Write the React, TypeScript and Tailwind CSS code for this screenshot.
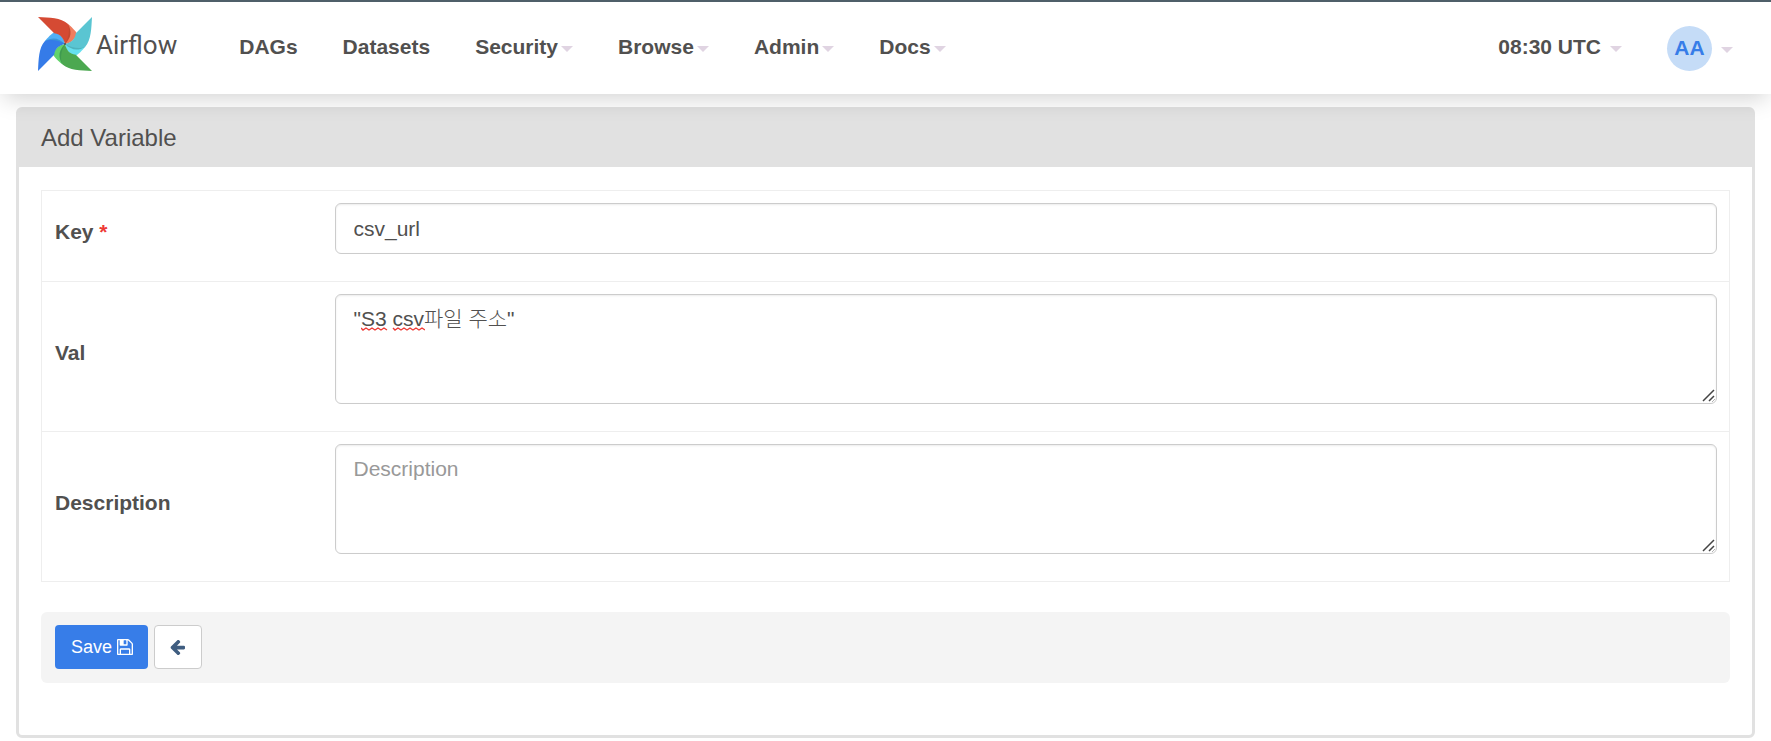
import { useState } from 'react'

const navLinks = [
  { label: 'DAGs', menu: false },
  { label: 'Datasets', menu: false },
  { label: 'Security', menu: true },
  { label: 'Browse', menu: true },
  { label: 'Admin', menu: true },
  { label: 'Docs', menu: true },
]

const blades = [
  { turn: 'rotate(0 80 80)', main: '#d54a33', fold: '#f07d5f', inner: '#c4482f' },
  { turn: 'rotate(90 80 80)', main: '#5ac5d2', fold: '#66e0ef', inner: '#4fb3bd' },
  { turn: 'rotate(180 80 80)', main: '#4ca850', fold: '#62d36b', inner: '#3f9a50' },
  { turn: 'rotate(270 80 80)', main: '#357be8', fold: '#50aff5', inner: '#3a94d8' },
]

const fieldClass =
  'block w-full rounded-md border border-[#ccc] bg-white px-[18px] py-[9px] text-[21px] leading-[30px] text-[#51504f] shadow-[inset_0_1px_2px_rgba(0,0,0,0.075)] outline-none placeholder:text-[#999]'

function Caret() {
  return (
    <svg className="mt-1 h-[6px] w-3 shrink-0" viewBox="0 0 12 6" aria-hidden="true">
      <path d="M0 0h12L6 6z" fill="#e0d4e2" />
    </svg>
  )
}

function Pinwheel() {
  return (
    <svg className="size-[54px]" viewBox="0 0 160 160" aria-hidden="true">
      {blades.map((blade) => (
        <g key={blade.turn} transform={blade.turn}>
          <path d="M88 20C98 28 112 42 114 47Q116 50 113 54C108 68 96 78 80 80Z" fill={blade.fold} />
          <path d="M88 20C102 42 98 62 80 80Z" fill={blade.inner} />
        </g>
      ))}
      {blades.map((blade) => (
        <path
          key={blade.turn}
          transform={blade.turn}
          d="M0 0C34 2 68 2 88 20C95 36 92 60 80 80C76 64 68 50 48 48Z"
          fill={blade.main}
        />
      ))}
      <circle cx="80" cy="80" r="3" fill="#51504f" />
    </svg>
  )
}

function SaveIcon() {
  return (
    <svg className="size-4" viewBox="0 128 1536 1536" fill="currentColor" aria-hidden="true">
      <path d="M384 1536h768v-384h-768v384zM1280 1536h128v-896q0-14-10-38.5t-20-34.5l-281-281q-10-10-34-20t-39-10v416q0 40-28 68t-68 28h-576q-40 0-68-28t-28-68v-416h-128v1280h128v-416q0-40 28-68t68-28h832q40 0 68 28t28 68v416zM896 608v-320q0-13-9.500-22.500t-22.500-9.500h-192q-13 0-22.500 9.500t-9.500 22.500v320q0 13 9.500 22.500t22.500 9.500h192q13 0 22.500-9.500t9.500-22.500zM1536 640v928q0 40-28 68t-68 28h-1344q-40 0-68-28t-28-68v-1344q0-40 28-68t68-28h928q40 0 88 20t76 48l280 280q28 28 48 76t20 88z" />
    </svg>
  )
}

function BackIcon() {
  return (
    <svg className="size-[15px]" viewBox="0 192 1536 1536" fill="currentColor" aria-hidden="true">
      <path d="M1536 896v128q0 53-32.500 90.500t-84.500 37.500h-704l293 294q38 36 38 90t-38 90l-75 76q-37 37-90 37-52 0-91-37l-651-652q-37-37-37-90 0-52 37-91l651-650q38-38 91-38 52 0 90 38l75 74q38 38 38 91t-38 91l-293 293h704q52 0 84.500 37.500t32.500 90.500z" />
    </svg>
  )
}

function ResizeGrip() {
  return (
    <svg
      className="pointer-events-none absolute right-px bottom-px size-[14px]"
      viewBox="0 0 14 14"
      aria-hidden="true"
    >
      <path d="M0 0h13v10l-3 3H0z" fill="#fff" />
      <path d="M1 12L12 1M7 12L12 7" stroke="#444" strokeWidth="1.5" fill="none" />
    </svg>
  )
}

function Header() {
  return (
    <header className="relative z-10 flex h-[94px] items-center justify-between border-t-2 border-[#4f5f69] bg-white px-[38px] text-[21px] leading-[30px] font-bold shadow-[0_8px_22px_-4px_rgba(0,0,0,0.18)]">
      <div className="flex items-center">
        <a href="#home" className="mb-2 flex items-center gap-1 font-['Roboto',sans-serif] text-[26px] font-normal">
          <Pinwheel />
          <span className="pt-0.5">Airflow</span>
        </a>
        <nav className="mb-[2px] ml-[62px] flex gap-[45px]">
          {navLinks.map((link) =>
            link.menu ? (
              <button key={link.label} type="button" className="flex items-center gap-[3px]">
                {link.label}
                <Caret />
              </button>
            ) : (
              <a key={link.label} href={`#${link.label.toLowerCase()}`}>
                {link.label}
              </a>
            ),
          )}
        </nav>
      </div>
      <div className="flex items-center gap-[45px]">
        <button type="button" className="mb-[2px] flex items-center gap-[9px]">
          08:30 UTC
          <Caret />
        </button>
        <button type="button" className="flex items-center gap-[9px]">
          <span className="flex size-[45px] items-center justify-center rounded-full bg-[#c5dcf7] text-[#377de8]">
            AA
          </span>
          <Caret />
        </button>
      </div>
    </header>
  )
}

export default function App() {
  const [key, setKey] = useState('csv_url')
  const [val, setVal] = useState('"S3 csv파일 주소"')
  const [description, setDescription] = useState('')

  return (
    <div className="bg-white font-['Liberation_Sans','Noto_Sans_CJK_KR_Light','Noto_Sans_CJK_KR',sans-serif] text-[21px] leading-[30px] text-[#51504f]">
      <Header />

      <main className="px-4 pt-[13px] pb-[3px]">
        <form className="rounded-md border-[3px] border-[#e1e1e1]" onSubmit={(e) => e.preventDefault()}>
          <h1 className="bg-[#e1e1e1] px-[22px] pt-[13px] pb-[14px] text-2xl leading-[30px]">Add Variable</h1>

          <div className="px-[22px] pt-[23px] pb-[52px]">
            <table className="w-full border-collapse border border-[#eee]">
              <tbody>
                <tr className="border-b border-[#eee]">
                  <th scope="row" className="w-[281px] pb-2 pl-[13px] text-left align-middle">
                    <label htmlFor="key">
                      Key <span className="text-[#ee3a35]">*</span>
                    </label>
                  </th>
                  <td className="px-3 pt-3 pb-[27px]">
                    <input
                      id="key"
                      className={`${fieldClass} h-[51px]`}
                      value={key}
                      onChange={(e) => setKey(e.target.value)}
                    />
                  </td>
                </tr>
                <tr className="border-b border-[#eee]">
                  <th scope="row" className="pb-2 pl-[13px] text-left align-middle">
                    <label htmlFor="val">Val</label>
                  </th>
                  <td className="px-3 pt-3 pb-[27px]">
                    <div className="relative">
                      <textarea
                        id="val"
                        rows={3}
                        spellCheck={false}
                        className={fieldClass}
                        value={val}
                        onChange={(e) => setVal(e.target.value)}
                      />
                      {/* spelling marks under "S3" and "csv" */}
                      <svg
                        className="pointer-events-none absolute top-[33px] left-[26px] h-[4px] w-[64px]"
                        viewBox="0 0 64 4"
                        fill="none"
                        stroke="#ee3a35"
                        strokeWidth="1.4"
                        aria-hidden="true"
                      >
                        <path d="M0 1l2 2l3-2l3 2l3-2l3 2l3-2l3 2l3-2l3 2" />
                        <path d="M32 1l2 2l3-2l3 2l3-2l3 2l3-2l3 2l3-2l3 2l3-2l3 2" />
                      </svg>
                      <ResizeGrip />
                    </div>
                  </td>
                </tr>
                <tr>
                  <th scope="row" className="pb-2 pl-[13px] text-left align-middle">
                    <label htmlFor="description">Description</label>
                  </th>
                  <td className="px-3 pt-3 pb-[27px]">
                    <div className="relative">
                      <textarea
                        id="description"
                        rows={3}
                        placeholder="Description"
                        className={fieldClass}
                        value={description}
                        onChange={(e) => setDescription(e.target.value)}
                      />
                      <ResizeGrip />
                    </div>
                  </td>
                </tr>
              </tbody>
            </table>

            <div className="mt-[30px] flex gap-[6px] rounded-md bg-[#f4f4f4] px-[14px] pt-[13px] pb-[14px] text-lg leading-6">
              <button
                type="submit"
                className="flex h-11 items-center gap-[5px] rounded-sm bg-[#377de8] pr-[15px] pl-4 text-white"
              >
                Save
                <SaveIcon />
              </button>
              <button
                type="button"
                aria-label="Back"
                className="flex h-11 w-12 items-center rounded-sm border border-[#ccc] bg-white pl-[15px] text-[#3f5d80]"
              >
                <BackIcon />
              </button>
            </div>
          </div>
        </form>
      </main>
    </div>
  )
}
